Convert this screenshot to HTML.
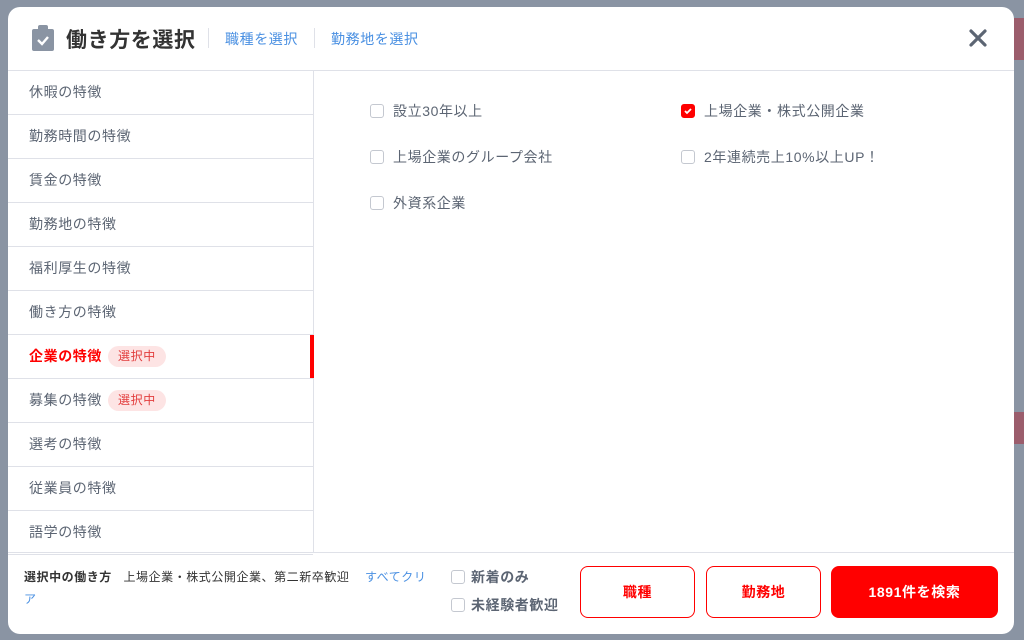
<!DOCTYPE html>
<html><head><meta charset="utf-8"><style>
*{box-sizing:border-box;margin:0;padding:0}
body{width:1024px;height:640px;overflow:hidden;background:#8a94a3;font-family:"Liberation Sans","Noto Sans CJK JP",sans-serif;position:relative;letter-spacing:0.6px}
.bg1{position:absolute;left:1014px;top:18px;width:10px;height:42px;background:#9b5d6c}
.bg2{position:absolute;left:1014px;top:412px;width:10px;height:32px;background:#9b5d6c}
.modal{position:absolute;left:8px;top:7px;width:1006px;height:627px;background:#fff;border-radius:12px;overflow:hidden}
.hdr{height:64px;border-bottom:1px solid #dfe1e8;position:relative}
.icon{position:absolute;left:24px;top:18px}
.title{position:absolute;left:58px;top:17px;font-size:21px;font-weight:bold;color:#333}
.sep{position:absolute;top:21px;width:1px;height:20px;background:#dfe1e8}
.lnk{position:absolute;top:22px;font-size:14px;color:#4a90e2}
.close{position:absolute;left:961px;top:22px}
.nav{position:absolute;left:0;top:64px;width:306px;height:481px;border-right:1px solid #dfe1e8}
.nav div{height:44px;border-bottom:1px solid #dfe1e8;font-size:14px;color:#5c6573;padding-left:21px;line-height:43px;position:relative}
.nav div.sel{color:#f00;font-weight:bold}
.nav div.sel:after{content:"";position:absolute;right:-1px;top:0;width:4px;height:43px;background:#f00}
.tag{display:inline-block;background:#fde4e4;color:#e23c3c;font-size:12px;font-weight:normal;border-radius:11px;padding:0 10px;line-height:21px;margin-left:6px;vertical-align:1px}
.opt{position:absolute;font-size:14px;color:#5c6573}
.cb{position:absolute;width:14px;height:14px;border:1px solid #c4c8d0;border-radius:3px;background:#fff}
.cb.on{background:#f00;border-color:#f00}
.foot{position:absolute;left:0;top:545px;width:1006px;height:82px;border-top:1px solid #dfe1e8}
.btn{position:absolute;top:13px;height:52px;border:1px solid #f00;border-radius:8px;color:#f00;font-size:14px;font-weight:bold;text-align:center;line-height:50px}
</style></head><body>
<div class="bg1"></div><div class="bg2"></div>
<div class="modal">
<div class="hdr">
<svg class="icon" width="22" height="26" viewBox="0 0 22 26"><rect x="0" y="4" width="22" height="22" rx="2" fill="#8a94a3"/><rect x="6" y="0" width="10" height="7" rx="2" fill="#8a94a3"/><path d="M6 15l4 4 6-7" stroke="#fff" stroke-width="2.4" fill="none"/></svg>
<div class="title">働き方を選択</div>
<div class="sep" style="left:200px"></div>
<div class="lnk" style="left:217px">職種を選択</div>
<div class="sep" style="left:306px"></div>
<div class="lnk" style="left:323px">勤務地を選択</div>
<svg class="close" width="18" height="18" viewBox="0 0 18 18"><path d="M2 2L16 16M16 2L2 16" stroke="#5c6573" stroke-width="3.2" stroke-linecap="round"/></svg>
</div>
<div class="nav">
<div>休暇の特徴</div><div>勤務時間の特徴</div><div>賃金の特徴</div><div>勤務地の特徴</div><div>福利厚生の特徴</div><div>働き方の特徴</div>
<div class="sel">企業の特徴<span class="tag">選択中</span></div>
<div>募集の特徴<span class="tag">選択中</span></div>
<div>選考の特徴</div><div>従業員の特徴</div><div>語学の特徴</div>
</div>
<div class="cb" style="left:362px;top:97px"></div><div class="opt" style="left:385px;top:94px">設立30年以上</div>
<div class="cb on" style="left:673px;top:97px"><svg width="12" height="12" viewBox="0 0 12 12" style="position:absolute;left:0;top:0"><path d="M3 6l2 2 4-4" stroke="#fff" stroke-width="1.8" fill="none"/></svg></div><div class="opt" style="left:696px;top:94px">上場企業・株式公開企業</div>
<div class="cb" style="left:362px;top:143px"></div><div class="opt" style="left:385px;top:140px">上場企業のグループ会社</div>
<div class="cb" style="left:673px;top:143px"></div><div class="opt" style="left:696px;top:140px">2年連続売上10%以上UP！</div>
<div class="cb" style="left:362px;top:189px"></div><div class="opt" style="left:385px;top:186px">外資系企業</div>
<div class="foot">
<div style="position:absolute;left:16px;top:13px;width:412px;font-size:12px;line-height:22px;color:#333;letter-spacing:0.55px"><b>選択中の働き方</b>&nbsp;&nbsp; 上場企業・株式公開企業、第二新卒歓迎&nbsp;&nbsp;&nbsp; <span style="color:#4a90e2">すべてクリア</span></div>
<div class="cb" style="left:443px;top:17px"></div><div style="position:absolute;left:463px;top:14px;font-size:14px;font-weight:bold;color:#5c6573">新着のみ</div>
<div class="cb" style="left:443px;top:45px"></div><div style="position:absolute;left:463px;top:42px;font-size:14px;font-weight:bold;color:#5c6573">未経験者歓迎</div>
<div class="btn" style="left:572px;width:115px">職種</div>
<div class="btn" style="left:698px;width:115px">勤務地</div>
<div class="btn" style="left:823px;width:167px;background:#f00;color:#fff">1891件を検索</div>
</div>
</div>
</body></html>
